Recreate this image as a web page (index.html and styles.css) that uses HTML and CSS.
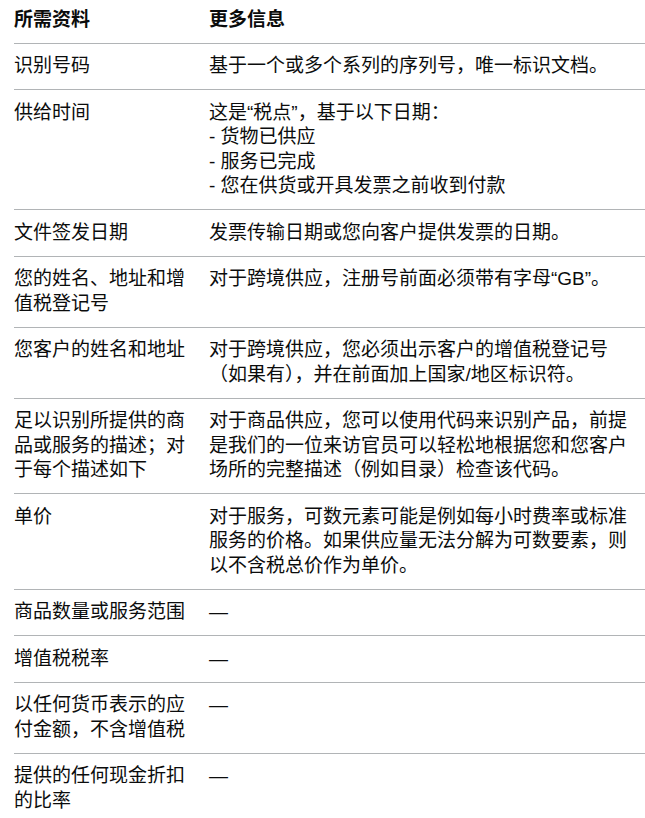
FILE: index.html
```html
<!DOCTYPE html>
<html lang="zh-CN">
<head>
<meta charset="utf-8">
<title>所需资料</title>
<link rel="stylesheet" href="styles.css">
</head>
<body>
<table class="info-table">
  <colgroup>
    <col class="col-key">
    <col class="col-value">
  </colgroup>
  <thead>
    <tr>
      <th>所需资料</th>
      <th>更多信息</th>
    </tr>
  </thead>
  <tbody>
    <tr>
      <td>识别号码</td>
      <td>基于一个或多个系列的序列号，唯一标识文档。</td>
    </tr>
    <tr>
      <td>供给时间</td>
      <td>这是“税点”，基于以下日期：<br>- 货物已供应<br>- 服务已完成<br>- 您在供货或开具发票之前收到付款</td>
    </tr>
    <tr>
      <td>文件签发日期</td>
      <td>发票传输日期或您向客户提供发票的日期。</td>
    </tr>
    <tr>
      <td>您的姓名、地址和增值税登记号</td>
      <td>对于跨境供应，注册号前面必须带有字母“GB”。</td>
    </tr>
    <tr>
      <td>您客户的姓名和地址</td>
      <td>对于跨境供应，您必须出示客户的增值税登记号（如果有），并在前面加上国家/地区标识符。</td>
    </tr>
    <tr>
      <td>足以识别所提供的商品或服务的描述；对于每个描述如下</td>
      <td>对于商品供应，您可以使用代码来识别产品，前提是我们的一位来访官员可以轻松地根据您和您客户场所的完整描述（例如目录）检查该代码。</td>
    </tr>
    <tr>
      <td>单价</td>
      <td>对于服务，可数元素可能是例如每小时费率或标准服务的价格。如果供应量无法分解为可数要素，则以不含税总价作为单价。</td>
    </tr>
    <tr>
      <td>商品数量或服务范围</td>
      <td>—</td>
    </tr>
    <tr>
      <td>增值税税率</td>
      <td>—</td>
    </tr>
    <tr>
      <td>以任何货币表示的应付金额，不含增值税</td>
      <td>—</td>
    </tr>
    <tr>
      <td>提供的任何现金折扣的比率</td>
      <td>—</td>
    </tr>
  </tbody>
</table>
</body>
</html>
```

FILE: styles.css
```css
html, body {
  margin: 0;
  padding: 0;
  background: #ffffff;
}

body {
  font-family: "Liberation Sans", Arial, "Noto Sans CJK SC", sans-serif;
  font-size: 19px;
  line-height: 24.5px;
  color: #0b0c0c;
}

.info-table {
  margin-left: 14px;
  width: 631px;
  border-collapse: collapse;
  table-layout: fixed;
}

.col-key {
  width: 195px;
}

.info-table th,
.info-table td {
  text-align: left;
  vertical-align: top;
  padding: 10.5px 10px 10.5px 0;
  border-bottom: 1px solid #b1b4b6;
}

.info-table th:first-child,
.info-table td:first-child {
  padding-right: 20px;
}

.info-table th {
  font-weight: 700;
  padding-top: 8px;
  padding-bottom: 10px;
}
```
